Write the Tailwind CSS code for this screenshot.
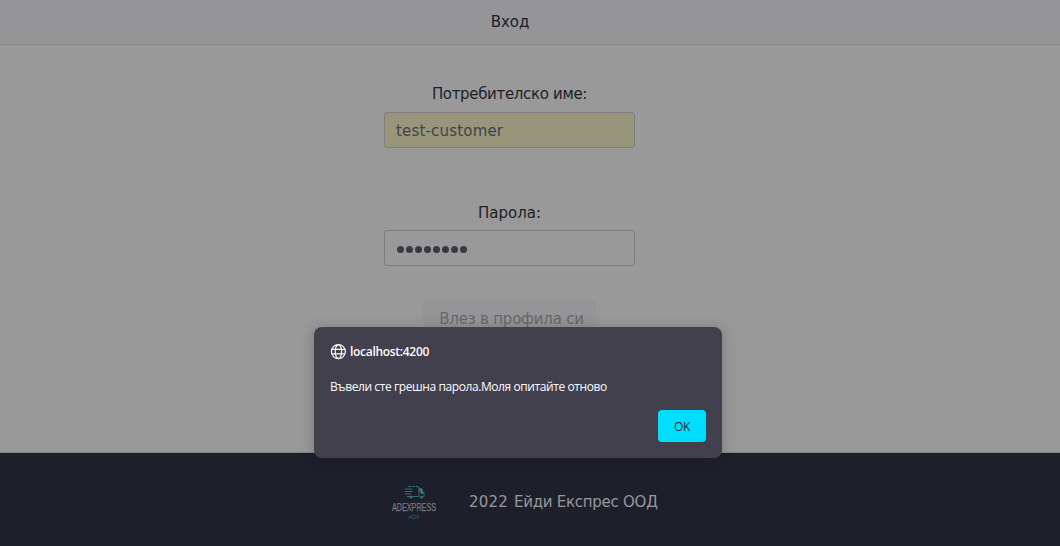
<!DOCTYPE html>
<html lang="bg">
<head>
<meta charset="utf-8">
<title>Вход</title>
<script src="https://cdn.jsdelivr.net/npm/@tailwindcss/browser@4"></script>
</head>
<body class="relative flex h-[546px] flex-col overflow-hidden bg-[#99999a] font-['DejaVu_Sans',sans-serif] text-[15px] leading-5 text-[#202028]">
<header class="flex h-[45px] shrink-0 justify-center border-b border-[#838387] bg-[#959597] pt-3 pr-10">
  <h1 class="whitespace-nowrap">Вход</h1>
</header>
<main class="flex h-[408px] shrink-0 flex-col items-center border-b border-[#858587] pt-[39px] pr-[41px]">
  <label class="whitespace-nowrap tracking-[-0.33px]">Потребителско име:</label>
  <div class="mt-2 flex h-9 w-[251px] items-center rounded-[3px] border border-[#7d7d84] bg-[#99957a] px-[11px] pt-[2px] text-[#40434a]"><span class="whitespace-nowrap tracking-[0.18px]">test-customer</span></div>
  <label class="mt-[55px] whitespace-nowrap">Парола:</label>
  <div class="mt-[7px] flex h-9 w-[251px] items-center gap-[2px] rounded-[3px] border border-[#7d7d84] px-3 pt-[3px]">
    <i class="size-[7px] rounded-full bg-[#373a41]"></i><i class="size-[7px] rounded-full bg-[#373a41]"></i><i class="size-[7px] rounded-full bg-[#373a41]"></i><i class="size-[7px] rounded-full bg-[#373a41]"></i><i class="size-[7px] rounded-full bg-[#373a41]"></i><i class="size-[7px] rounded-full bg-[#373a41]"></i><i class="size-[7px] rounded-full bg-[#373a41]"></i><i class="size-[7px] rounded-full bg-[#373a41]"></i>
  </div>
  <button class="mt-[34px] h-9 w-[173px] rounded-[3px] bg-[#959598] pt-[2px] pl-1 tracking-[-0.2px] whitespace-nowrap text-[#68686b]">Влез в профила си</button>
</main>
<footer class="flex h-[93px] shrink-0 items-start bg-[#1d1f2b] pl-[388px] text-[#97989b]">
  <svg class="mt-[31px] h-11 w-[52px] shrink-0 overflow-visible" viewBox="-3 0 52 44" fill="none">
    <g stroke="#2f6f73"><path d="M17 2.500h9" stroke-dasharray="3 1"/><path d="M14 5h7M13.500 7.500h8M14 10h6M16 12.500h3M21.500 12.500h6"/><path d="M26 2.500l2 1v9M28 4.500h2.500l1.500 3 1 1.500v3.500h-1"/></g>
    <path d="M28 4h2.500l1.500 4 .5 2h-2l-2-3z" fill="#397478"/><circle cx="20" cy="13.200" r="1.400" fill="#397478"/><circle cx="30.500" cy="13.200" r="1.400" fill="#397478"/>
    <text x="1" y="27" textLength="44" lengthAdjust="spacingAndGlyphs" font-family="Liberation Sans" font-size="11" fill="#777a82" stroke="#777a82" stroke-width=".25">ADEXPRESS</text>
    <text x="17.500" y="34.500" textLength="11" lengthAdjust="spacing" font-family="Liberation Sans" font-size="5.500" fill="#2e656c">ADX</text>
  </svg>
  <span class="mt-[39px] ml-[29px] whitespace-nowrap"><span class="tracking-[0.2px]">2022 </span><span class="ml-px tracking-[-0.26px]">Ейди Експрес ООД</span></span>
</footer>
<div role="alertdialog" class="absolute top-[327px] left-[314px] flex h-[131px] w-[408px] flex-col rounded-lg bg-[#43404d] px-4 font-['Open_Sans',sans-serif] text-xs leading-4 text-[#fbfbfe] shadow-[0_2px_14px_rgba(30,30,40,0.28)]">
  <div class="mt-[17px] flex items-center gap-1">
    <svg class="size-4" viewBox="0 0 16 16" fill="none" stroke="currentColor" stroke-width="1.200"><circle cx="8.400" cy="7.600" r="7"/><ellipse cx="8.400" cy="7.600" rx="3.200" ry="7"/><path d="M1.900 5.300h13M1.900 9.900h13"/></svg>
    <span class="font-semibold tracking-[-0.3px] whitespace-nowrap">localhost:4200</span>
  </div>
  <p class="mt-[19px] tracking-[-0.41px] whitespace-nowrap">Въвели сте грешна парола.Моля опитайте отново</p>
  <button class="mt-[15px] h-8 w-12 self-end rounded bg-[#00ddff] pt-px tracking-[-0.3px] text-[#2b2a33]">OK</button>
</div>
</body>
</html>
